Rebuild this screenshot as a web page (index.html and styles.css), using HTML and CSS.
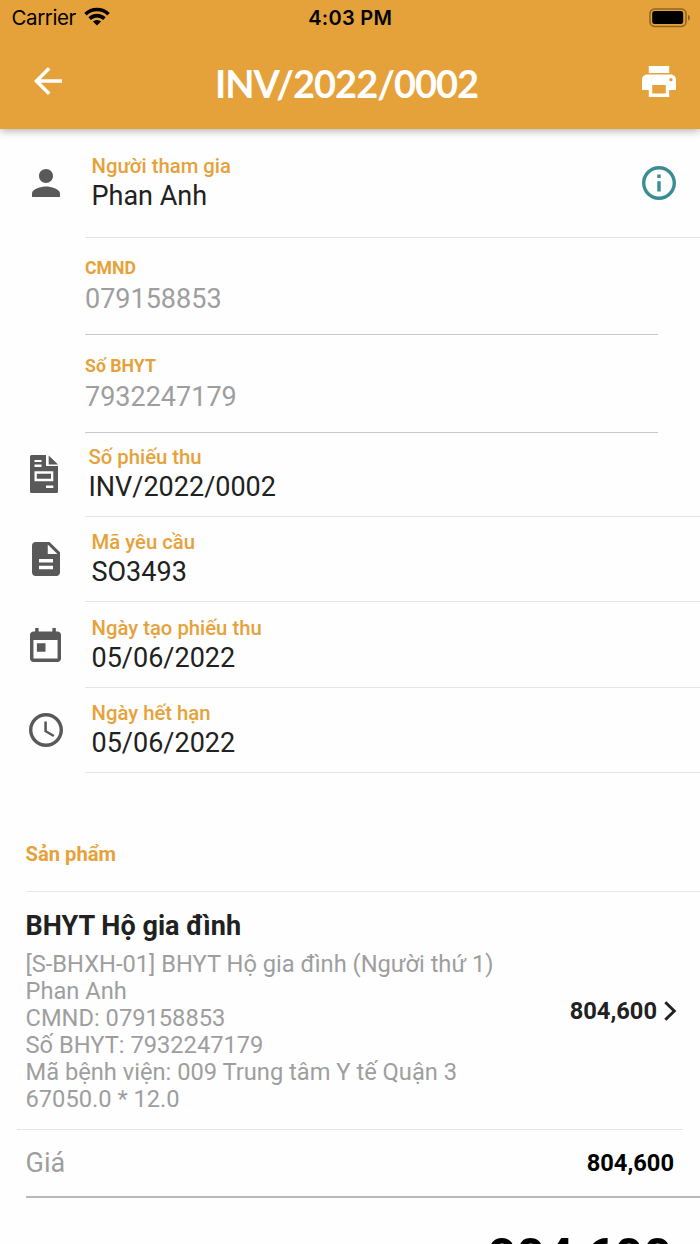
FILE: index.html
```html
<!DOCTYPE html>
<html lang="vi">
<head>
<meta charset="utf-8">
<title>INV/2022/0002</title>
<link rel="stylesheet" href="styles.css">
</head>
<body>
<header class="header">
  <div class="status">
    <div class="carrier"><span>Carrier</span>
      <svg width="26" height="19" viewBox="0 0 26 19"><g fill="none" stroke="#000" stroke-width="3.6"><path d="M1.5 7.2A16.4 16.4 0 0 1 24.5 7.2"/><path d="M5.6 11.6A10.6 10.6 0 0 1 20.4 11.6"/></g><path d="M13 18.6L8.9 14.6A5.9 5.9 0 0 1 17.1 14.6Z"/></svg>
    </div>
    <div class="time">4:03 PM</div>
    <svg class="battery" width="42" height="20" viewBox="0 0 42 20"><rect x="1" y="1" width="36" height="17.4" rx="4.6" fill="none" stroke="#8d6424" stroke-width="1.5"/><rect x="3.2" y="3.1" width="31" height="13" rx="2.4"/><path d="M39 6.7Q41 7.7 41 9.7Q41 11.7 39 12.7Z" fill="#8d6424"/></svg>
  </div>
  <div class="toolbar">
    <svg class="back" width="28" height="28" viewBox="4 4 16 16"><path fill="#fff" d="M20 11H7.83l5.59-5.59L12 4l-8 8 8 8 1.41-1.41L7.83 13H20v-2z"/></svg>
    <h1 class="title">INV/2022/0002</h1>
    <svg class="print" width="34" height="31" viewBox="2 3 20 18" preserveAspectRatio="none"><path fill="#fff" d="M19 8H5c-1.66 0-3 1.34-3 3v6h4v4h12v-4h4v-6c0-1.66-1.34-3-3-3zm-3 11H8v-5h8v5zm3-7c-.55 0-1-.45-1-1s.45-1 1-1 1 .45 1 1-.45 1-1 1zm-1-9H6v4h12V3z"/></svg>
  </div>
</header>
<main>
  <section class="row person">
    <div class="icon"><svg width="28" height="28" viewBox="4 4 16 16"><path d="M12 12c2.21 0 4-1.79 4-4s-1.79-4-4-4-4 1.790-4 4 1.790 4 4 4zm0 2c-2.670 0-8 1.340-8 4v2h16v-2c0-2.660-5.330-4-8-4z"/></svg></div>
    <div class="body"><div class="text"><div class="label">Người tham gia</div><div class="value">Phan Anh</div></div>
      <svg class="info" width="34" height="34" viewBox="2 2 20 20"><path fill="#3a8d92" d="M11 7h2v2h-2zm0 4h2v6h-2zm1-9C6.480 2 2 6.480 2 12s4.480 10 10 10 10-4.480 10-10S17.520 2 12 2zm0 18c-4.410 0-8-3.590-8-8s3.590-8 8-8 8 3.590 8 8-3.590 8-8 8z"/></svg>
    </div>
  </section>
  <section class="field"><div class="field-label">CMND</div><div class="field-value">079158853</div></section>
  <section class="field second"><div class="field-label">Số BHYT</div><div class="field-value">7932247179</div></section>
  <section class="row receipt">
    <div class="icon"><svg width="28" height="38" viewBox="0 0 28 38"><path fill-rule="evenodd" d="M1.500 0H16V11H28V36.500Q28 38 26.500 38H1.500Q0 38 0 36.500V1.500Q0 0 1.500 0ZM4.500 5V7H11.500V5ZM4.500 9.500V12H11.500V9.500ZM4.500 16.300V26.300H23.300V16.300ZM6.800 18.800H21V23.800H6.800ZM16 30.500V33H23.300V30.500Z"/><path d="M18.700 0.500L28 9.500H18.700Z"/></svg></div>
    <div class="body"><div class="text"><div class="label">Số phiếu thu</div><div class="value">INV/2022/0002</div></div></div>
  </section>
  <section class="row">
    <div class="icon"><svg width="28" height="34" viewBox="4 2 16 20" preserveAspectRatio="none"><path d="M14 2H6c-1.100 0-1.990.9-1.990 2L4 20c0 1.100.89 2 1.990 2H18c1.100 0 2-.9 2-2V8l-6-6zm2 16H8v-2h8v2zm0-4H8v-2h8v2zm-3-5V3.500L18.500 9H13z"/></svg></div>
    <div class="body"><div class="text"><div class="label">Mã yêu cầu</div><div class="value">SO3493</div></div></div>
  </section>
  <section class="row">
    <div class="icon"><svg width="31" height="34" viewBox="3 1 18 20" preserveAspectRatio="none"><path d="M19 3h-1V1h-2v2H8V1H6v2H5c-1.110 0-1.990.9-1.990 2L3 19c0 1.100.89 2 2 2h14c1.100 0 2-.9 2-2V5c0-1.100-.9-2-2-2zm0 16H5V8h14v11zM7 10h5v5H7z"/></svg></div>
    <div class="body"><div class="text"><div class="label">Ngày tạo phiếu thu</div><div class="value">05/06/2022</div></div></div>
  </section>
  <section class="row">
    <div class="icon"><svg width="34" height="34" viewBox="2 2 20 20"><path d="M11.990 2C6.470 2 2 6.480 2 12s4.470 10 9.990 10C17.520 22 22 17.520 22 12S17.520 2 11.990 2zM12 20c-4.420 0-8-3.580-8-8s3.580-8 8-8 8 3.580 8 8-3.580 8-8 8z"/><path d="M12.500 7H11v6l5.250 3.150.75-1.230-4.500-2.670z"/></svg></div>
    <div class="body"><div class="text"><div class="label">Ngày hết hạn</div><div class="value">05/06/2022</div></div></div>
  </section>
  <h2 class="section-title">Sản phẩm</h2>
  <section class="product">
    <div class="description">
      <h3 class="name">BHYT Hộ gia đình</h3>
      <div class="details">
        <div>[S-BHXH-01] BHYT Hộ gia đình (Người thứ 1)</div>
        <div>Phan Anh</div>
        <div>CMND: 079158853</div>
        <div>Số BHYT: 7932247179</div>
        <div>Mã bệnh viện: 009 Trung tâm Y tế Quận 3</div>
        <div>67050.0 * 12.0</div>
      </div>
    </div>
    <div class="price"><span>804,600</span><svg width="13" height="20" viewBox="0 0 13 20"><path fill="none" stroke="#212121" stroke-width="2.900" d="M1.300 1.200L10.300 10L1.300 18.800"/></svg></div>
  </section>
  <section class="subtotal"><span class="caption">Giá</span><span class="amount">804,600</span></section>
  <div class="total">804,600</div>
</main>
</body>
</html>
```
FILE: styles.css
```css
* { box-sizing: border-box; }
html, body { margin: 0; height: 1244px; overflow: hidden; }
body { background: #fefefe; font-family: Roboto, sans-serif; color: #212121; white-space: nowrap; }
svg { display: block; flex: none; }
h1, h2, h3 { margin: 0; }

.header { position: relative; height: 128.500px; background: #e6a23a; box-shadow: 0 2px 8px rgba(0,0,0,.3); }
.status { display: grid; grid-template-columns: 1fr auto 1fr; height: 36px; padding: 0 9px 0 11.500px; align-items: center; font: 20.500px/36px Inter, sans-serif; color: #000; }
.carrier { display: flex; align-items: center; gap: 8px; letter-spacing: -.4px; }
.carrier svg { margin-bottom: 3px; }
.time { font-weight: 600; font-size: 20px; letter-spacing: .3px; margin: 0 2px 0 0; }
.battery { justify-self: end; margin-bottom: 1px; }
.toolbar { display: flex; align-items: center; justify-content: space-between; height: 92px; padding: 0 24px 0 34px; }
.back { margin-top: -2px; }
.title { color: #fff; font: 700 38px/44px Lato, sans-serif; letter-spacing: -1px; margin-right: 11px; padding-top: 1px; }
.print { margin-top: -1px; }

.row { display: flex; height: 85.300px; }
.row .icon { width: 84.500px; padding-left: 12px; padding-right: 5px; display: flex; align-items: center; justify-content: center; fill: #595959; }
.row .icon svg { margin-top: -1px; }
.row .body { flex: 1; display: flex; justify-content: space-between; padding: 12.300px 24px 0 7px; border-bottom: 1px solid #e4e4e4; }
.label { font-size: 20.300px; line-height: 26px; font-weight: 500; color: #e6a23a; }
.value { font-size: 27px; line-height: 34px; }
.person { height: 109.500px; }
.person .body { padding-top: 24.500px; }
.info { margin-top: 13px; }
.receipt { height: 84.500px; }
.receipt .body { padding-left: 4px; padding-top: 11.700px; }
.receipt .icon { padding-right: 9px; }

.field { height: 97.300px; margin: 0 42px 0 85px; padding-top: 19px; border-bottom: 1px solid #c9c9c9; }
.second { padding-top: 19.700px; }
.field-label { font-size: 17.700px; line-height: 22px; font-weight: 700; color: #e6a23a; }
.field-value { font-size: 27px; line-height: 40px; color: #9e9e9e; }

.section-title { height: 119px; margin-left: 25.500px; padding-top: 66.500px; border-bottom: 1px solid #e8e8e8; font-size: 20.200px; line-height: 30px; color: #e6a23a; }
.product { display: flex; justify-content: space-between; align-items: center; height: 238px; margin: 0 17px; padding: 2px 6px 0 8.500px; border-bottom: 1px solid #e4e4e4; }
.name { font-size: 27px; line-height: 34px; font-weight: 700; letter-spacing: .04px; }
.details { margin-top: 8px; color: #9e9e9e; font-size: 23.680px; line-height: 27px; }
.price { display: flex; align-items: center; gap: 7px; font-size: 23.700px; font-weight: 700; }
.subtotal { display: flex; align-items: center; justify-content: space-between; height: 68px; margin-left: 25.500px; padding: 0 26px 0 0; border-bottom: 2px solid #b8b8b8; }
.caption { font-size: 27px; color: #9e9e9e; }
.amount { font-size: 23.700px; font-weight: 700; color: #000; }
.total { padding: 30px 28px 0 0; text-align: right; font-size: 50px; line-height: 58px; font-weight: 700; color: #000; }
```
